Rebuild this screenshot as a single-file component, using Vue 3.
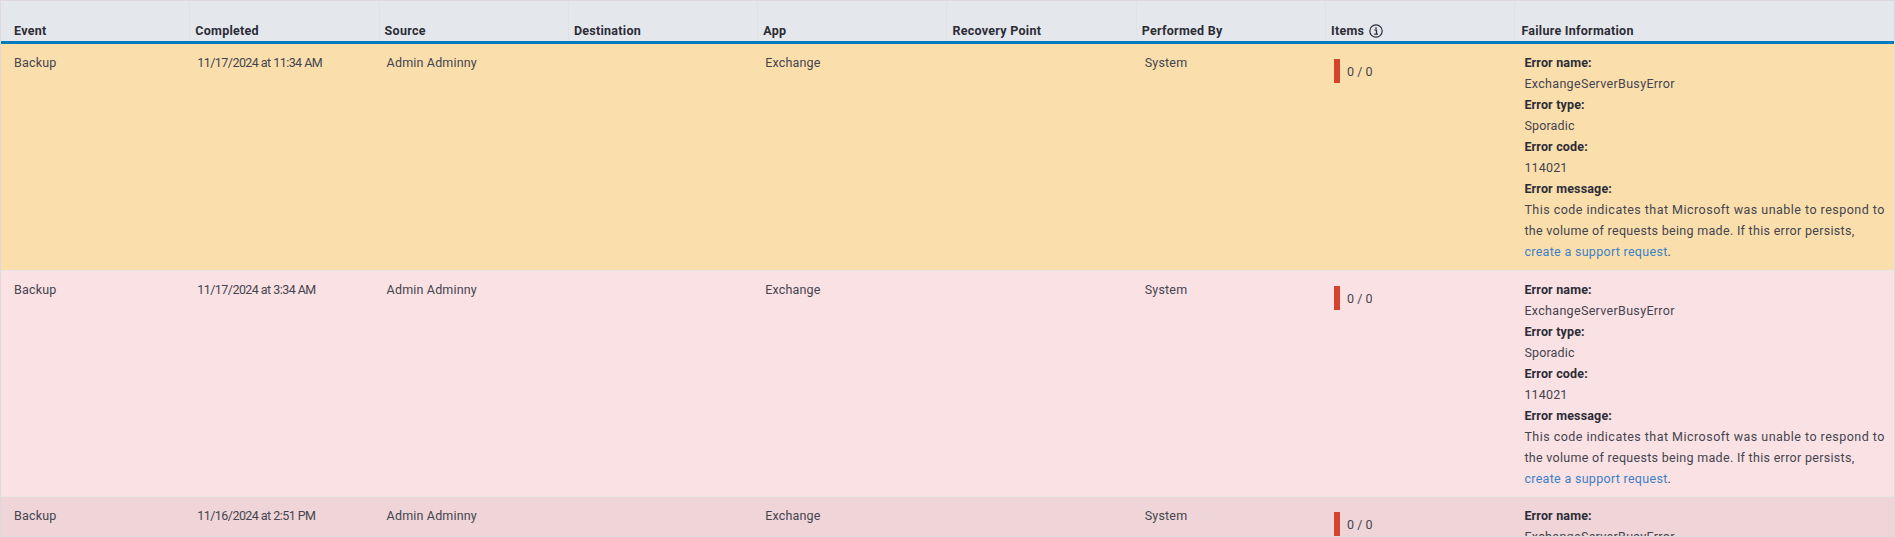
<script setup>
const rows = [
  { cls: 'warn', date: '11/17/2024 at 11:34 AM' },
  { cls: 'fail', date: '11/17/2024 at 3:34 AM' },
  { cls: 'hover', date: '11/16/2024 at 2:51 PM' },
]
const heads = ['Event', 'Completed', 'Source', 'Destination', 'App', 'Recovery Point', 'Performed By', 'Items', 'Failure Information']
</script>

<template>
  <div class="frame">
    <table class="grid">
      <colgroup>
        <col v-for="n in 8" :key="n" class="narrow" />
        <col class="wide" />
      </colgroup>
      <thead>
        <tr>
          <th v-for="h in heads" :key="h">
            {{ h }}
            <svg v-if="h === 'Items'" class="info" width="14" height="14" viewBox="0 0 14 14">
              <circle cx="7" cy="7" r="6.2" fill="none" stroke="currentColor" stroke-width="1.2" />
              <circle cx="7" cy="4.1" r="0.9" fill="currentColor" />
              <path d="M5.4 6.1H7.5V9.9M5.2 10.1H9" fill="none" stroke="currentColor" stroke-width="1.2" />
            </svg>
          </th>
        </tr>
      </thead>
      <tbody>
        <tr v-for="r in rows" :key="r.date" :class="r.cls">
          <td>Backup</td>
          <td class="date">{{ r.date }}</td>
          <td>Admin Adminny</td>
          <td></td>
          <td>Exchange</td>
          <td></td>
          <td>System</td>
          <td>
            <div class="items"><span class="bar"></span><span class="count">0 / 0</span></div>
          </td>
          <td class="failure">
            <div class="label">Error name:</div>
            <div class="error-name">ExchangeServerBusyError</div>
            <div class="label">Error type:</div>
            <div>Sporadic</div>
            <div class="label">Error code:</div>
            <div>114021</div>
            <div class="label">Error message:</div>
            <div class="message">This code indicates that Microsoft was unable to respond to<br />the volume of requests being made. If this error persists,<br /><a href="#" class="link">create a support request</a>.</div>
          </td>
        </tr>
      </tbody>
    </table>
  </div>
</template>

<style scoped>
.frame {
  box-sizing: border-box;
  height: 537px;
  overflow: hidden;
  border: 1px solid #e0d8dc;
  border-bottom-color: #dcdcdc;
  font-family: Roboto, "Liberation Sans", sans-serif;
  font-size: 12.5px;
  line-height: 21px;
  letter-spacing: 0.17px;
  color: #44444e;
}
.grid {
  width: 100%;
  table-layout: fixed;
  border-collapse: separate;
  border-spacing: 0;
}
.narrow { width: 10%; }
.wide { width: 20%; }
th {
  padding: 19px 5px 3px 5px;
  background: #e4e8ec;
  box-shadow: inset 0 -3px 0 #0079be, inset -1px 0 0 #dfe3e7;
  text-align: left;
  font-weight: 700;
  font-size: 12.5px;
  letter-spacing: 0.27px;
  color: #2c2c36;
  white-space: nowrap;
}
th:first-child { padding-left: 13px; }
th:last-child { padding-left: 6px; }
.info {
  vertical-align: -3px;
  margin-left: 1px;
}
td {
  padding: 8px 7px 7px 8px;
  vertical-align: top;
  border-bottom: 1px solid #e8e4e4;
}
td:nth-child(-n+5) { padding-left: 7px; }
td:first-child { padding-left: 13px; }
.warn td { padding-bottom: 8px; }
.date { letter-spacing: -0.55px; }
td.failure { padding-left: 9px; padding-right: 5px; }
.error-name { letter-spacing: 0.32px; }
.message { letter-spacing: 0.3px; }
.message::first-line { letter-spacing: 0.47px; }
.warn td { background: #fadfad; }
.fail td { background: #fae1e4; }
.hover td { background: #efd5d8; }
.items {
  display: flex;
  align-items: center;
  gap: 7px;
  height: 24px;
  margin-top: 7px;
}
.bar {
  width: 6px;
  height: 24px;
  background: #d5432f;
}
.count { letter-spacing: 0; }
.label {
  font-weight: 700;
  color: #2c2c36;
}
.link {
  color: #3d7fc4;
  text-decoration: none;
}
</style>

<style>
html, body { margin: 0; overflow: hidden; background: #fff; }
</style>
